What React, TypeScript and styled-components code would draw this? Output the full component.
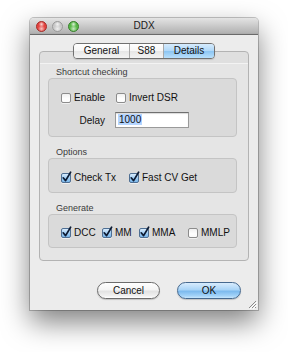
import React from "react";
import styled, { createGlobalStyle } from "styled-components";

const Global = createGlobalStyle`
  html, body { margin: 0; padding: 0; background: #ffffff; }
  body { font-family: "Liberation Sans", Arial, sans-serif; color: #111; }
`;

const Page = styled.div`
  box-sizing: border-box;
  width: 288px;
  height: 352px;
  padding: 18px 0 0 30px;
`;

const Window = styled.div`
  position: relative;
  width: 228px;
  border-radius: 4px 4px 0 0;
  background: #ececec;
  box-shadow: 0 12px 28px rgba(0, 0, 0, 0.5), 0 0 0 1px rgba(0, 0, 0, 0.22);
  overflow: hidden;
`;

const TitleBar = styled.div`
  box-sizing: border-box;
  height: 17px;
  display: grid;
  grid-template-columns: 1fr auto 1fr;
  align-items: center;
  padding: 0 6px;
  background: linear-gradient(#e4e4e4, #b4b4b4 90%, #a8a8a8);
  border-bottom: 1px solid #6a6a6a;
`;

const Lights = styled.div`
  display: flex;
  gap: 5px;
`;

const Light = styled.span<{ $c: string; $d: string }>`
  width: 11px;
  height: 11px;
  border-radius: 50%;
  box-sizing: border-box;
  border: 1px solid ${(p) => p.$d};
  background: radial-gradient(circle at 50% 75%, #ffffffb0 0%, transparent 45%),
    radial-gradient(circle at 50% 25%, #ffffffcc 0%, transparent 35%), ${(p) => p.$c};
`;

const Title = styled.div`
  font-size: 10px;
  color: #1a1a1a;
  line-height: 16px;
`;

const Body = styled.div`
  padding: 8px 9px 11px;
  display: flex;
  flex-direction: column;
`;

const Tabs = styled.div`
  display: flex;
  flex-direction: column;
  align-items: center;
`;

const TabStrip = styled.div`
  position: relative;
  z-index: 1;
  display: flex;
  height: 16px;
  box-sizing: border-box;
  margin-bottom: -8px;
  border: 1px solid #707070;
  border-radius: 4px;
  overflow: hidden;
  box-shadow: 0 1px 1px rgba(0, 0, 0, 0.12);
`;

const Tab = styled.div<{ $w: number; $active?: boolean }>`
  width: ${(p) => p.$w}px;
  box-sizing: border-box;
  font-size: 10px;
  line-height: 14px;
  text-align: center;
  color: #111;
  border-left: 1px solid #a9a9a9;
  &:first-child { border-left: none; }
  background: ${(p) =>
    p.$active
      ? "linear-gradient(#d6ebfd 0%, #b0d8f8 48%, #8cc5f2 52%, #b9e0fc 100%)"
      : "linear-gradient(#ffffff 0%, #f6f6f6 48%, #e6e6e6 52%, #f3f3f3 100%)"};
`;

const TabBox = styled.div`
  align-self: stretch;
  box-sizing: border-box;
  border: 1px solid #b3b3b3;
  border-radius: 4px;
  background: linear-gradient(#dfdfdf 0px, #dfdfdf 11px, #f3f3f3 11px, #f3f3f3 12px, #e5e5e5 12px);
  padding: 15px 11px 12px 8px;
  display: flex;
  flex-direction: column;
  gap: 10px;
`;

const Section = styled.div`
  display: flex;
  flex-direction: column;
`;

const SectionLabel = styled.div`
  font-size: 9px;
  line-height: 10px;
  padding: 0 0 1px 8px;
  color: #3a3a3a;
`;

const Group = styled.div<{ $pt: number }>`
  box-sizing: border-box;
  border: 1px solid #c4c4c4;
  border-radius: 4px;
  background: #dadada;
  padding: ${(p) => p.$pt}px 8px 8px 12px;
  display: flex;
  flex-direction: column;
  gap: 8px;
`;

const Row = styled.div<{ $cols: string }>`
  display: grid;
  grid-template-columns: ${(p) => p.$cols};
  align-items: center;
  height: 12px;
`;

const CheckWrap = styled.label`
  display: flex;
  align-items: center;
  gap: 3px;
  font-size: 10px;
  line-height: 12px;
  color: #111;
  white-space: nowrap;
`;

const Box = styled.span<{ $on?: boolean }>`
  position: relative;
  width: 10px;
  height: 10px;
  box-sizing: border-box;
  border-radius: 2px;
  border: 1px solid ${(p) => (p.$on ? "#4f6f93" : "#8c8c8c")};
  background: ${(p) =>
    p.$on
      ? "linear-gradient(#d9ecfd, #9ccbf3 55%, #7bb7ea)"
      : "linear-gradient(#f0f0f0, #ffffff 60%, #fafafa)"};
  box-shadow: 0 1px 0 rgba(255, 255, 255, 0.6);
  flex: none;
`;

const Tick = styled.svg`
  position: absolute;
  left: 0px;
  top: -3px;
  overflow: visible;
`;

const Check = ({ label, on }: { label: string; on?: boolean }) => (
  <CheckWrap>
    <Box $on={on}>
      {on && (
        <Tick width="10" height="12" viewBox="0 0 10 12">
          <path d="M1.2 6.8 L3.6 9.6 L8.6 1.2" fill="none" stroke="#0d1b33" strokeWidth="1.7" strokeLinecap="round" strokeLinejoin="round" />
        </Tick>
      )}
    </Box>
    {label}
  </CheckWrap>
);

const FieldRow = styled.div`
  display: flex;
  align-items: center;
  gap: 10px;
`;

const FieldLabel = styled.span`
  width: 44px;
  text-align: right;
  font-size: 10px;
  color: #111;
`;

const Input = styled.div`
  box-sizing: border-box;
  width: 74px;
  height: 16px;
  background: #fff;
  border: 1px solid #9a9a9a;
  border-top-color: #6f6f6f;
  box-shadow: inset 0 1px 1px rgba(0, 0, 0, 0.15);
  padding: 1px 0 0 2px;
  font-size: 10px;
  line-height: 12px;
`;

const Selected = styled.span`
  background: #b5d5ff;
  padding: 0 1px;
`;

const ButtonRow = styled.div`
  display: flex;
  justify-content: flex-end;
  gap: 17px;
  margin-top: 21px;
  padding-right: 8px;
`;

const Button = styled.div<{ $w: number; $primary?: boolean }>`
  box-sizing: border-box;
  width: ${(p) => p.$w}px;
  height: 17px;
  border-radius: 9px;
  border: 1px solid ${(p) => (p.$primary ? "#46698f" : "#6c6c6c")};
  background: ${(p) =>
    p.$primary
      ? "linear-gradient(#d8ecfd 0%, #a9d4f7 45%, #7cbaee 55%, #a2d2f8 85%, #c6e6fd 100%)"
      : "linear-gradient(#ffffff 0%, #f5f5f5 45%, #e2e2e2 55%, #f0f0f0 85%, #ffffff 100%)"};
  box-shadow: 0 1px 1px rgba(0, 0, 0, 0.18);
  font-size: 10px;
  line-height: 15px;
  text-align: center;
  color: #111;
`;

const Grip = styled.svg`
  position: absolute;
  right: 1px;
  bottom: 1px;
`;

export default function App() {
  return (
    <Page>
      <Global />
      <Window>
        <TitleBar>
          <Lights>
            <Light $c="#e4433f" $d="#a3302c" />
            <Light $c="#c9c9c9" $d="#9a9a9a" />
            <Light $c="#58b847" $d="#3a7f2f" />
          </Lights>
          <Title>DDX</Title>
          <span />
        </TitleBar>
        <Body>
          <Tabs>
            <TabStrip>
              <Tab $w={55}>General</Tab>
              <Tab $w={34}>S88</Tab>
              <Tab $w={51} $active>
                Details
              </Tab>
            </TabStrip>
            <TabBox>
              <Section>
                <SectionLabel>Shortcut checking</SectionLabel>
                <Group $pt={13}>
                  <Row $cols="55px auto">
                    <Check label="Enable" />
                    <Check label="Invert DSR" />
                  </Row>
                  <FieldRow>
                    <FieldLabel>Delay</FieldLabel>
                    <Input>
                      <Selected>1000</Selected>
                    </Input>
                  </FieldRow>
                </Group>
              </Section>
              <Section>
                <SectionLabel>Options</SectionLabel>
                <Group $pt={13}>
                  <Row $cols="68px auto">
                    <Check label="Check Tx" on />
                    <Check label="Fast CV Get" on />
                  </Row>
                </Group>
              </Section>
              <Section>
                <SectionLabel>Generate</SectionLabel>
                <Group $pt={12}>
                  <Row $cols="41px 37px 49px auto">
                    <Check label="DCC" on />
                    <Check label="MM" on />
                    <Check label="MMA" on />
                    <Check label="MMLP" />
                  </Row>
                </Group>
              </Section>
            </TabBox>
          </Tabs>
          <ButtonRow>
            <Button $w={63}>Cancel</Button>
            <Button $w={64} $primary>
              OK
            </Button>
          </ButtonRow>
        </Body>
        <Grip width="10" height="10" viewBox="0 0 10 10">
          <path d="M9 2 L2 9 M9 5 L5 9 M9 8 L8 9" stroke="#8a8a8a" strokeWidth="1" />
          <path d="M10 3 L3 10 M10 6 L6 10" stroke="#ffffff" strokeWidth="1" />
        </Grip>
      </Window>
    </Page>
  );
}
